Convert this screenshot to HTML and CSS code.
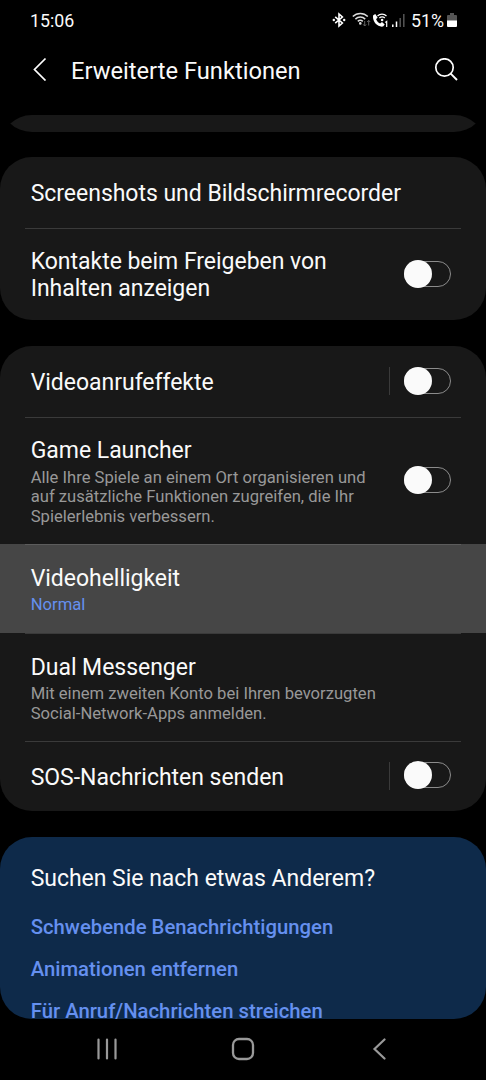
FILE: index.html
```html
<!DOCTYPE html>
<html lang="de">
<head>
    <meta charset="UTF-8">
    <meta name="viewport" content="width=device-width, initial-scale=1.0">
    <title>Erweiterte Funktionen</title>
    <link rel="stylesheet" href="styles.css">
</head>
<body>
    <div class="statusbar">
        <span class="clock">15:06</span>
        <div class="status-icons">
            <svg class="bluetooth" width="14" height="16" viewBox="0 0 14 16">
                <path d="M3.2 4.8l7.2 6.2L7 14V2l3.4 3-7.2 6.2" fill="none" stroke="#fff" stroke-width="1.6"/>
                <circle cx="1.8" cy="8" r="1.2" fill="#fff"/>
                <circle cx="12.2" cy="8" r="1.2" fill="#fff"/>
            </svg>
            <svg class="wifi" width="19" height="15" viewBox="0 0 19 15">
                <g fill="none" stroke="#ddd" stroke-width="1.5">
                    <path d="M.8 4.6a10.5 10.5 0 0 1 15 0"/>
                    <path d="M3.4 7.1a7 7 0 0 1 9.8 0"/>
                    <path d="M5.8 9.4a3.6 3.6 0 0 1 5 0"/>
                </g>
                <circle cx="8.3" cy="11.4" r="1.3" fill="#ddd"/>
                <path d="M12.7 9v5M11.2 12.4l1.5 1.6 1.5-1.6M16.7 13.5V8.3M15.2 10l1.5-1.6 1.5 1.6" fill="none" stroke="#666" stroke-width="1"/>
            </svg>
            <svg class="wificall" width="17" height="15" viewBox="0 0 17 15">
                <path d="M1.2 2.2L3.3 1l2.3 3.4-1.5 1.8c.8 2 2 3.2 4 4.2l1.9-1.4 2.7 2.5-1.6 2C5.6 14.6-.2 8.4 1.2 2.2z" fill="#fff"/>
                <g fill="none" stroke="#fff" stroke-width="1.2">
                    <path d="M5.5 3a6.2 6.2 0 0 1 9 0"/>
                    <path d="M7.4 5a3.7 3.7 0 0 1 5.4 0"/>
                </g>
                <circle cx="10.1" cy="7" r="1.3" fill="#fff"/>
                <path d="M13.3 9.5l1.4-1V14" fill="none" stroke="#fff" stroke-width="1.2"/>
            </svg>
            <svg class="signal" width="13" height="13" viewBox="0 0 13 13">
                <path d="M.8 10.5V13M4.5 7.5V13" stroke="#fff" stroke-width="1.5"/>
                <path d="M8.2 4V13M11.8 0V13" stroke="#555" stroke-width="1.5"/>
            </svg>
            <span class="percent">51%</span>
            <svg class="battery" width="10" height="15" viewBox="0 0 10 15">
                <path d="M3 0h4v2h2a1 1 0 0 1 1 1v5H0V3a1 1 0 0 1 1-1h2z" fill="#555"/>
                <path d="M0 7.5h10V13a1 1 0 0 1-1 1H1a1 1 0 0 1-1-1z" fill="#fff"/>
            </svg>
        </div>
    </div>

    <header class="header">
        <svg class="back" width="14" height="24" viewBox="0 0 14 24">
            <path d="M12.5 1.5l-11 11 11 11" fill="none" stroke="#fff" stroke-width="1.7"/>
        </svg>
        <h1>Erweiterte Funktionen</h1>
        <svg class="search" width="24" height="24" viewBox="0 0 24 24">
            <circle cx="10.5" cy="9.5" r="8.7" fill="none" stroke="#fff" stroke-width="1.7"/>
            <path d="M16.7 15.7l6.3 6.3" stroke="#fff" stroke-width="1.9"/>
        </svg>
    </header>

    <main class="content">
        <div class="card card-end"></div>

        <div class="card">
            <div class="row row-screenshots">
                <div class="text">
                    <div class="title">Screenshots und Bildschirmrecorder</div>
                </div>
            </div>
            <div class="row row-contacts">
                <div class="text">
                    <div class="title">Kontakte beim Freigeben von<br>Inhalten anzeigen</div>
                </div>
                <div class="switch"></div>
            </div>
        </div>

        <div class="card">
            <div class="row">
                <div class="text">
                    <div class="title">Videoanrufeffekte</div>
                </div>
                <div class="separator"></div>
                <div class="switch"></div>
            </div>
            <div class="row row-game">
                <div class="text">
                    <div class="title">Game Launcher</div>
                    <div class="desc">Alle Ihre Spiele an einem Ort organisieren und<br>auf zusätzliche Funktionen zugreifen, die Ihr<br>Spielerlebnis verbessern.</div>
                </div>
                <div class="switch"></div>
            </div>
            <div class="row row-brightness active">
                <div class="text">
                    <div class="title">Videohelligkeit</div>
                    <div class="desc value">Normal</div>
                </div>
            </div>
            <div class="row row-dual">
                <div class="text">
                    <div class="title">Dual Messenger</div>
                    <div class="desc">Mit einem zweiten Konto bei Ihren bevorzugten<br>Social-Network-Apps anmelden.</div>
                </div>
            </div>
            <div class="row row-sos">
                <div class="text">
                    <div class="title">SOS-Nachrichten senden</div>
                </div>
                <div class="separator"></div>
                <div class="switch"></div>
            </div>
        </div>

        <div class="card suggestions">
            <div class="title">Suchen Sie nach etwas Anderem?</div>
            <a class="link">Schwebende Benachrichtigungen</a>
            <a class="link">Animationen entfernen</a>
            <a class="link">Für Anruf/Nachrichten streichen</a>
        </div>
    </main>

    <nav class="navbar">
        <svg width="22" height="22" viewBox="0 0 22 22">
            <path d="M2.5 1.5v19M11 1.5v19M19.5 1.5v19" stroke="#999" stroke-width="2.2" stroke-linecap="round"/>
        </svg>
        <svg width="24" height="24" viewBox="0 0 24 24">
            <rect x="2" y="2" width="20" height="20" rx="6" fill="none" stroke="#999" stroke-width="2.3"/>
        </svg>
        <svg width="22" height="22" viewBox="0 0 22 22">
            <path d="M16.5 1.5L6.5 11l10 9.5" fill="none" stroke="#999" stroke-width="2.2" stroke-linecap="round"/>
        </svg>
    </nav>
</body>
</html>
```
FILE: styles.css
```css
* {
    box-sizing: border-box;
}
body {
    margin: 0;
    height: 1080px;
    overflow: hidden;
    display: flex;
    flex-direction: column;
    background: #000;
    color: #fafafa;
    font-family: Roboto, sans-serif;
}
svg {
    display: block;
    flex: none;
}
.statusbar {
    height: 40px;
    display: flex;
    align-items: center;
    justify-content: space-between;
    padding: 1px 29px 0 30px;
    font-size: 17.8px;
}
.status-icons {
    display: flex;
    align-items: center;
}
.bluetooth {
    margin-top: -1px;
}
.wifi {
    margin-left: 6px;
    margin-top: -2px;
}
.wificall {
    margin-left: 1px;
    margin-top: -1px;
}
.signal {
    margin-left: 3px;
}
.percent {
    margin-left: 6px;
}
.battery {
    margin-left: 3px;
    margin-top: -1px;
}
.header {
    height: 75px;
    display: flex;
    align-items: flex-start;
    padding: 17px 28px 0 33px;
}
.header h1 {
    flex: 1;
    margin: 0 0 0 24px;
    font-size: 23.7px;
    font-weight: 400;
    line-height: 28px;
}
.search {
    margin-top: 1px;
}
.content {
    height: 904px;
    overflow: hidden;
    border-radius: 32px;
}
.card {
    margin-bottom: 26px;
    border-radius: 32px;
    overflow: hidden;
    background: #181818;
}
/* last bit of the card scrolled out at the top */
.card-end {
    height: 80px;
    margin-top: -63px;
    margin-bottom: 25px;
}
.row {
    position: relative;
    height: 71px;
    display: flex;
    align-items: center;
    padding: 0 35px 0 30.7px;
}
.row + .row::before {
    content: "";
    position: absolute;
    top: 0;
    left: 25px;
    right: 25px;
    height: 1px;
    background: #3a3a3a;
}
.row-screenshots {
    height: 71.4px;
}
.row-contacts {
    height: 91.6px;
}
.row-game {
    height: 127px;
}
.row-brightness {
    height: 89px;
}
.row-dual {
    height: 108px;
}
.row-sos {
    height: 70px;
}
.active {
    background: #464646;
}
.row.active::before {
    background: #5c5c5c;
}
.text {
    flex: 1;
    padding-top: 3.6px;
}
.title {
    font-size: 23px;
    line-height: 26.5px;
    letter-spacing: -0.03px;
}
.desc {
    margin-top: 3px;
    font-size: 16.63px;
    line-height: 19.4px;
    color: #989898;
}
.value {
    color: #6590ef;
}
.separator {
    width: 1px;
    height: 28px;
    margin-right: 14px;
    background: #3a3a3a;
}
.switch {
    position: relative;
    width: 47px;
    height: 26px;
    margin-top: -1px;
    border: 1px solid #8c8c8c;
    border-radius: 13px;
}
.switch::before {
    content: "";
    position: absolute;
    top: -2px;
    left: -1px;
    width: 28px;
    height: 28px;
    border-radius: 50%;
    background: #fafafa;
}
.suggestions {
    height: 240px;
    padding: 28.6px 30px 0 30.7px;
    background: #0e2a4a;
}
.link {
    display: block;
    margin-top: 18px;
    font-size: 20.3px;
    font-weight: 500;
    line-height: 24px;
    color: #6590ef;
}
.title + .link {
    margin-top: 22.5px;
}
.navbar {
    flex: 1;
    display: flex;
    align-items: center;
    justify-content: center;
    gap: 113px;
    padding-bottom: 1px;
}
```
